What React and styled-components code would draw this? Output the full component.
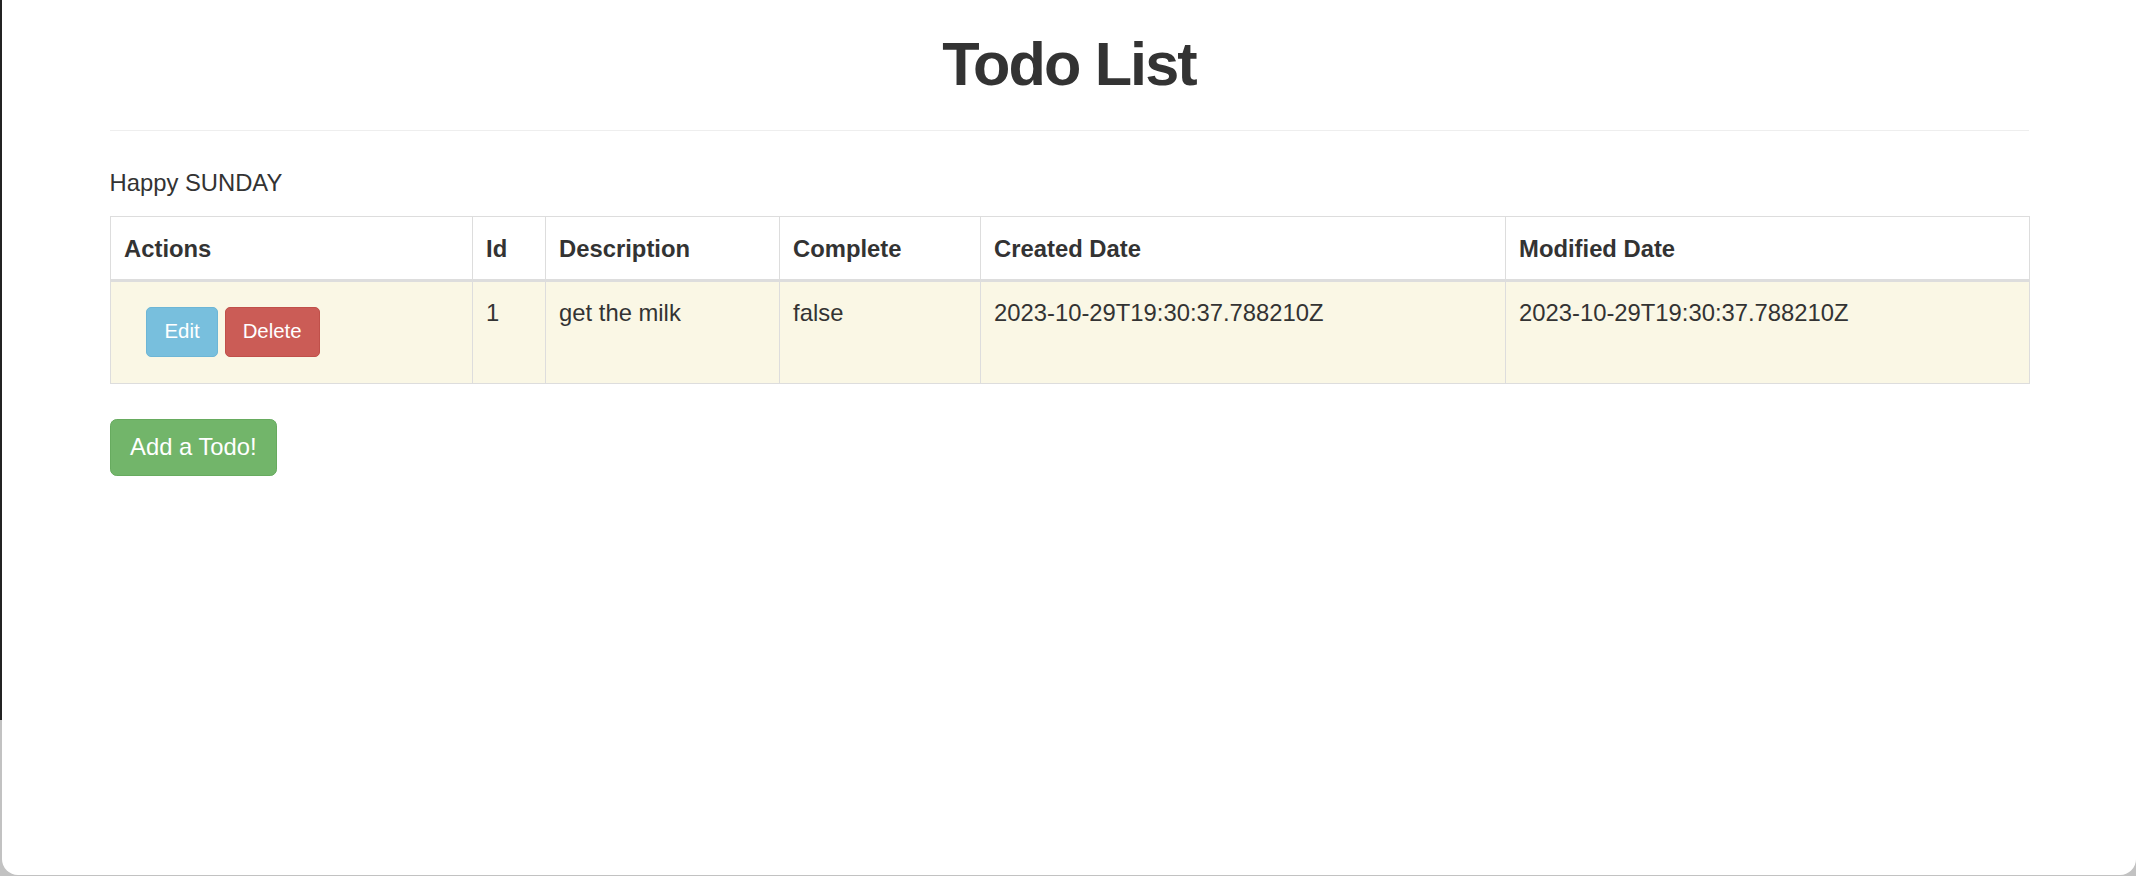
import React from "react";
import styled, { createGlobalStyle } from "styled-components";

const GlobalStyle = createGlobalStyle`
  html, body {
    margin: 0;
    padding: 0;
    width: 2136px;
    height: 876px;
    overflow: hidden;
  }
  body {
    font-family: "Liberation Sans", Arial, Helvetica, sans-serif;
    color: #333;
  }
  * { box-sizing: border-box; }
`;

const Desktop = styled.div`
  width: 2136px;
  height: 876px;
  display: flex;
  background: linear-gradient(to bottom, #232323 0, #232323 720px, #c2c2c2 720px, #c2c2c2 100%);
`;

const Window = styled.div`
  margin-left: 2px;
  width: 2134px;
  height: 875px;
  background: #ffffff;
  border-radius: 0 0 16px 16px;
  display: flex;
  justify-content: center;
`;

const Container = styled.div`
  width: 1919px;
  display: flex;
  flex-direction: column;
  align-items: flex-start;
`;

const Title = styled.h1`
  align-self: stretch;
  margin: 31px 0 0;
  font-size: 61.2px;
  line-height: 67.3px;
  font-weight: 700;
  letter-spacing: -1.9px;
  text-align: center;
  color: #333;
`;

const Rule = styled.hr`
  align-self: stretch;
  margin: 31.5px 0 0;
  border: 0;
  border-top: 1px solid #eeeeee;
  height: 0;
`;

const Greeting = styled.div`
  margin: 35px 0 16px;
  font-size: 23.8px;
  line-height: 34px;
`;

const Table = styled.table`
  width: 1919px;
  table-layout: fixed;
  border-collapse: collapse;
  border: 1px solid #dddddd;
  margin-bottom: 35px;
  font-size: 23.8px;
  line-height: 34px;
`;

const Th = styled.th`
  padding: 14.8px 13.6px 13.6px;
  text-align: left;
  vertical-align: bottom;
  font-weight: 700;
  border: 1px solid #dddddd;
  border-bottom: 3px solid #dddddd;
`;

const Row = styled.tr`
  background: ${(p) => (p.$warning ? "#faf7e5" : "transparent")};
`;

const Td = styled.td`
  padding: 13.8px 13.6px 15.6px;
  vertical-align: top;
  border: 1px solid #dddddd;
`;

const Actions = styled.div`
  display: flex;
  gap: 7px;
  padding: 11px 0 11px 22.4px;
`;

const variants = {
  info: { bg: "#78bfdd", border: "#6db6d6" },
  danger: { bg: "#cb5c56", border: "#c0504a" },
  success: { bg: "#72b56a", border: "#67ab5f" },
};

const SmallButton = styled.button`
  font-family: inherit;
  font-size: 20.4px;
  line-height: 30.6px;
  padding: 8.5px 17px;
  color: #ffffff;
  background: ${(p) => variants[p.$variant].bg};
  border: 1px solid ${(p) => variants[p.$variant].border};
  border-radius: 5px;
  cursor: pointer;
`;

const AddButton = styled.button`
  font-family: inherit;
  font-size: 23.8px;
  line-height: 34px;
  padding: 10.2px 19.6px;
  color: #ffffff;
  background: ${variants.success.bg};
  border: 1px solid ${variants.success.border};
  border-radius: 6.8px;
  cursor: pointer;
`;

const columns = [
  { key: "actions", label: "Actions", width: 362 },
  { key: "id", label: "Id", width: 73 },
  { key: "description", label: "Description", width: 234 },
  { key: "complete", label: "Complete", width: 201 },
  { key: "created", label: "Created Date", width: 525 },
  { key: "modified", label: "Modified Date", width: 524 },
];

const todos = [
  {
    id: 1,
    description: "get the milk",
    complete: false,
    created: "2023-10-29T19:30:37.788210Z",
    modified: "2023-10-29T19:30:37.788210Z",
  },
];

export default function App() {
  return (
    <>
      <GlobalStyle />
      <Desktop>
        <Window>
          <Container>
            <Title>Todo List</Title>
            <Rule />
            <Greeting>Happy SUNDAY</Greeting>
            <Table>
              <colgroup>
                {columns.map((c) => (
                  <col key={c.key} style={{ width: c.width }} />
                ))}
              </colgroup>
              <thead>
                <tr>
                  {columns.map((c) => (
                    <Th key={c.key}>{c.label}</Th>
                  ))}
                </tr>
              </thead>
              <tbody>
                {todos.map((t) => (
                  <Row key={t.id} $warning>
                    <Td>
                      <Actions>
                        <SmallButton $variant="info">Edit</SmallButton>
                        <SmallButton $variant="danger">Delete</SmallButton>
                      </Actions>
                    </Td>
                    <Td>{t.id}</Td>
                    <Td>{t.description}</Td>
                    <Td>{String(t.complete)}</Td>
                    <Td>{t.created}</Td>
                    <Td>{t.modified}</Td>
                  </Row>
                ))}
              </tbody>
            </Table>
            <AddButton>Add a Todo!</AddButton>
          </Container>
        </Window>
      </Desktop>
    </>
  );
}
